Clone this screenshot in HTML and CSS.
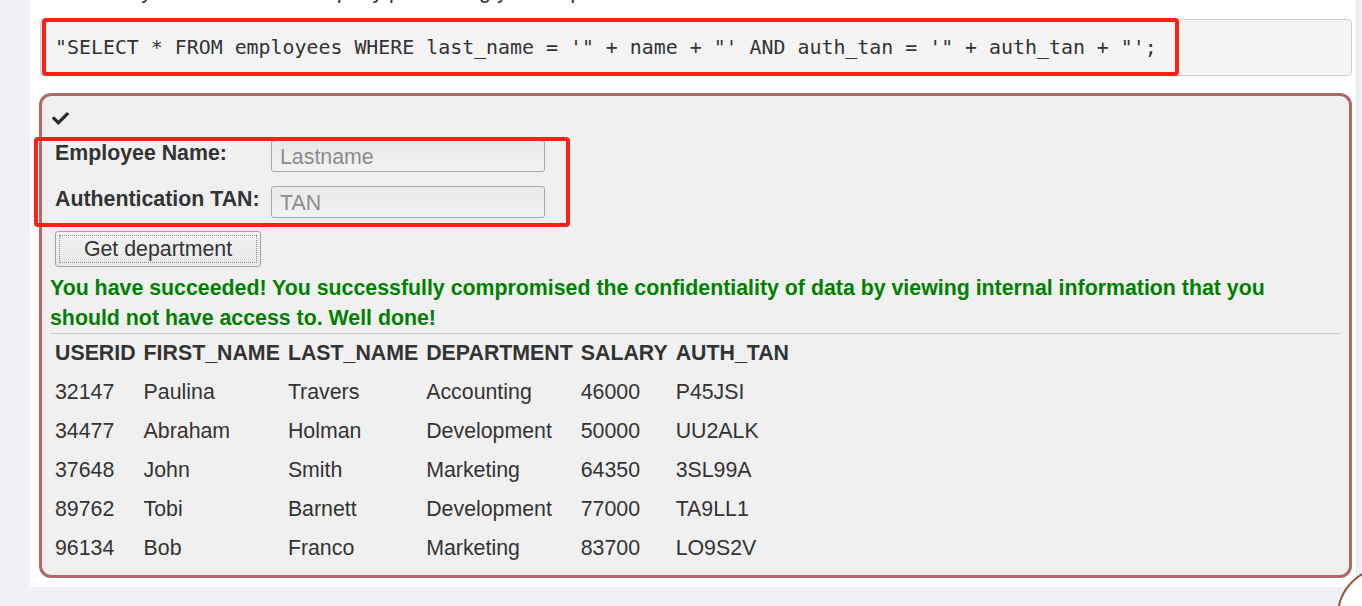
FILE: index.html
```html
<!DOCTYPE html>
<html lang="en">
<head>
<meta charset="utf-8">
<title>SQL Injection</title>
<link rel="stylesheet" href="styles.css">
</head>
<body>
<div class="card">
  <p class="intro">You already found out that the query performing your request looks like this:</p>
  <pre class="query">"SELECT * FROM employees WHERE last_name = '" + name + "' AND auth_tan = '" + auth_tan + "';<span class="mark mark-query"></span></pre>
  <div class="attack">
    <div class="check-row">
      <svg class="check" viewBox="0 65 512 382" width="17" height="13" aria-hidden="true"><path d="M173.898 439.404l-166.4-166.4c-9.997-9.997-9.997-26.206 0-36.204l36.203-36.204c9.997-9.998 26.207-9.998 36.204 0L192 312.69 432.095 72.596c9.997-9.997 26.207-9.997 36.204 0l36.203 36.204c9.997 9.997 9.997 26.206 0 36.204l-294.4 294.401c-9.998 9.997-26.207 9.997-36.204-.001z"/></svg>
    </div>
    <div class="form-grid">
      <label class="lbl">Employee Name:</label>
      <input class="field" type="text" placeholder="Lastname">
      <label class="lbl">Authentication TAN:</label>
      <input class="field" type="text" placeholder="TAN">
      <span class="mark mark-form"></span>
    </div>
    <button class="btn" type="button"><span class="btn-inner">Get department</span></button>
    <p class="success">You have succeeded! You successfully compromised the confidentiality of data by viewing internal information that you should not have access to. Well done!</p>
    <hr class="sep">
    <table class="results">
      <tr><th>USERID</th><th>FIRST_NAME</th><th>LAST_NAME</th><th>DEPARTMENT</th><th>SALARY</th><th>AUTH_TAN</th></tr>
      <tr><td>32147</td><td>Paulina</td><td>Travers</td><td>Accounting</td><td>46000</td><td>P45JSI</td></tr>
      <tr><td>34477</td><td>Abraham</td><td>Holman</td><td>Development</td><td>50000</td><td>UU2ALK</td></tr>
      <tr><td>37648</td><td>John</td><td>Smith</td><td>Marketing</td><td>64350</td><td>3SL99A</td></tr>
      <tr><td>89762</td><td>Tobi</td><td>Barnett</td><td>Development</td><td>77000</td><td>TA9LL1</td></tr>
      <tr><td>96134</td><td>Bob</td><td>Franco</td><td>Marketing</td><td>83700</td><td>LO9S2V</td></tr>
    </table>
  </div>
</div>
<div class="corner-bubble"></div>
</body>
</html>
```

FILE: styles.css
```css
html, body {
  margin: 0;
  padding: 0;
  height: 100%;
  overflow: hidden;
}
body {
  background: #f0f1f6;
  font-family: "Liberation Sans", Arial, sans-serif;
  font-size: 21.33px;
  color: #333;
}
.card {
  margin-left: 30px;
  width: 1312px;
  background: #fff;
  padding: 0 4px 9px 10px;
  border-radius: 0 0 4px 4px;
  border-right: 1px solid #e6e6e6;
}
.intro {
  margin: -24px 0 13px;
  line-height: 30px;
  white-space: nowrap;
}
.query {
  position: relative;
  margin: 0 0 17px;
  padding: 12px 14px;
  background: #f4f4f4;
  border: 1px solid #cfcfcf;
  border-radius: 4px;
  font-family: "DejaVu Sans Mono", "Liberation Mono", monospace;
  font-size: 19.9px;
  line-height: 31px;
  color: #333;
  white-space: pre;
}
.mark {
  position: absolute;
  border: 4px solid #ff1f14;
  border-radius: 4px;
  box-sizing: border-box;
  pointer-events: none;
}
.mark-query {
  left: 1px;
  top: -2px;
  width: 1137px;
  height: 58px;
}
.attack {
  margin-left: -1px;
  border: 3px solid #b06868;
  border-radius: 12px;
  background: #f0f0f0;
  padding: 12px 8px 7px 8px;
}
.check-row {
  height: 32px;
  box-sizing: border-box;
  padding: 4px 0 0 2px;
}
.check {
  display: block;
  fill: #2b2b2b;
}
.form-grid {
  position: relative;
  margin-left: 5px;
  display: grid;
  grid-template-columns: 206px 274px;
  grid-auto-rows: 32px;
  column-gap: 10px;
  row-gap: 14px;
  width: 490px;
}
.lbl {
  font-weight: bold;
  line-height: 26px;
  white-space: nowrap;
}
.field {
  box-sizing: border-box;
  width: 274px;
  height: 32px;
  border: 1px solid #a8a8a8;
  border-radius: 3px;
  background: linear-gradient(#e9e9e9, #f3f3f3);
  padding: 2px 8px 0;
  font-family: "Liberation Sans", Arial, sans-serif;
  font-size: 21.33px;
  color: #333;
}
.field::placeholder {
  color: #8c8c8c;
}
.mark-form {
  left: -21px;
  top: -3px;
  width: 536px;
  height: 90px;
}
.btn {
  display: block;
  margin: 13px 0 0 5px;
  width: 206px;
  height: 36px;
  padding: 3px;
  border: 1px solid #a4a4a4;
  border-radius: 3px;
  background: linear-gradient(#f2f2f2, #e8e8e8);
  font-family: "Liberation Sans", Arial, sans-serif;
  font-size: 21.33px;
  color: #333;
}
.btn-inner {
  display: block;
  height: 100%;
  box-sizing: border-box;
  border: 1px dotted #8a8a8a;
  line-height: 27px;
  text-align: center;
}
.success {
  margin: 6px 0 0;
  padding-right: 14px;
  line-height: 30px;
  font-weight: bold;
  color: #008000;
}
.sep {
  margin: 0;
  border: 0;
  border-top: 1px solid #cdcdcd;
  height: 0;
}
.results {
  border-collapse: collapse;
  border-spacing: 0;
}
.results th,
.results td {
  height: 39px;
  padding: 0 3px 0 5px;
  text-align: left;
  vertical-align: middle;
  white-space: nowrap;
}
.results th {
  font-weight: bold;
}
.corner-bubble {
  position: fixed;
  left: 1337px;
  top: 567px;
  width: 98px;
  height: 98px;
  box-sizing: border-box;
  border: 2px solid #9a5535;
  border-radius: 50%;
  background: #fff;
}
```
